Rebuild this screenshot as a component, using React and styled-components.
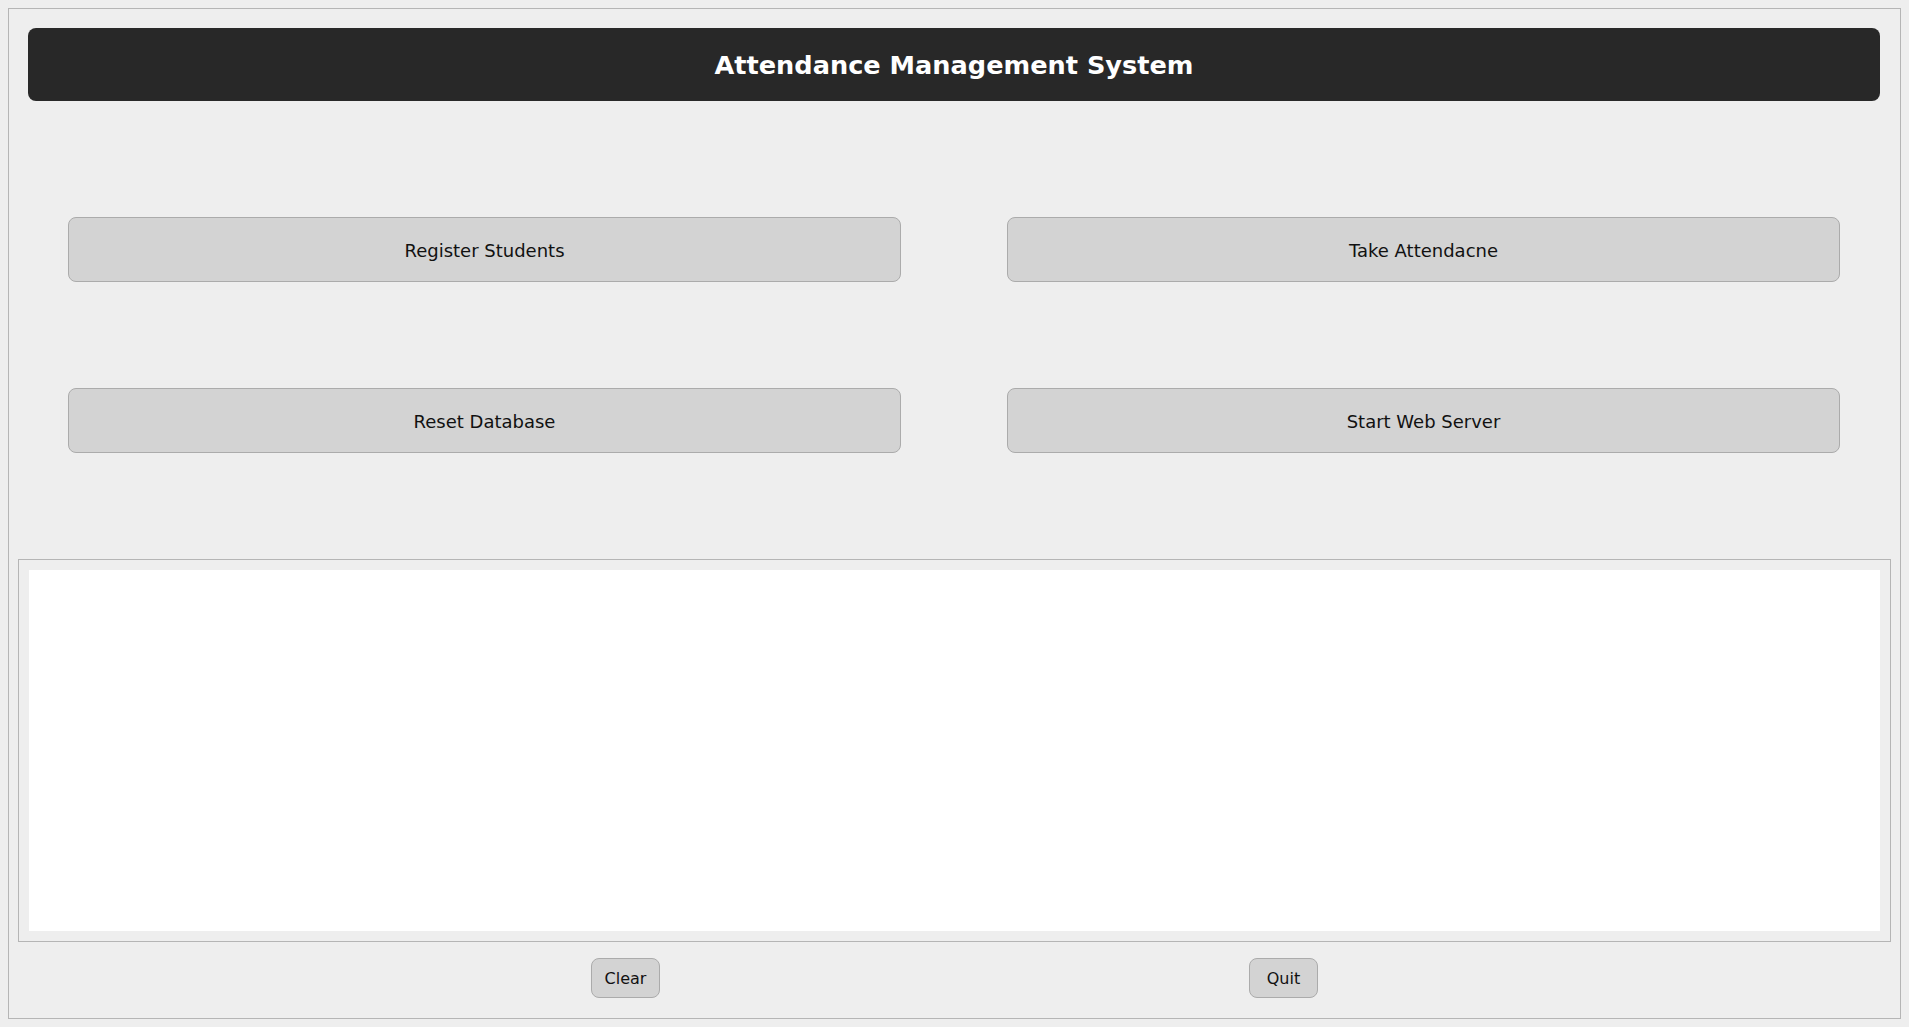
import React from 'react';
import styled, { createGlobalStyle } from 'styled-components';

const GlobalStyle = createGlobalStyle`
    html, body {
        margin: 0;
        padding: 0;
        background: #eeeeee;
    }

    body {
        margin: 8px;
        font-family: "DejaVu Sans", Verdana, sans-serif;
    }
`;

const App = () => {
    return (
        <>
            <GlobalStyle />
            <WindowFrame>
                <Header>Attendance Management System</Header>
                <ActionGrid>
                    <ActionButton>Register Students</ActionButton>
                    <ActionButton>Take Attendacne</ActionButton>
                    <ActionButton>Reset Database</ActionButton>
                    <ActionButton>Start Web Server</ActionButton>
                </ActionGrid>
                <OutputBox>
                    <OutputArea readOnly />
                </OutputBox>
                <Footer>
                    <SmallButton>Clear</SmallButton>
                    <SmallButton>Quit</SmallButton>
                </Footer>
            </WindowFrame>
        </>
    );
};

export default App;

const WindowFrame = styled.div`
    box-sizing: border-box;
    height: 1011px;
    border: 1px solid #b5b5b5;
    padding: 9px;
    display: flex;
    flex-direction: column;
    background: #eeeeee;
`;

const Header = styled.div`
    margin: 10px 11px 0 10px;
    height: 73px;
    flex-shrink: 0;
    display: flex;
    align-items: center;
    justify-content: center;
    padding-top: 1px;
    box-sizing: border-box;
    background: #282828;
    border-radius: 8px;
    color: #ffffff;
    font-weight: bold;
    font-size: 25.6px;
`;

const ActionGrid = styled.div`
    display: grid;
    grid-template-columns: 1fr 1fr;
    grid-auto-rows: 65px;
    column-gap: 106px;
    row-gap: 106px;
    padding: 116px 51px 106px 50px;
`;

const ActionButton = styled.button`
    font-family: inherit;
    font-size: 18px;
    color: #111111;
    padding: 2px 0 0;
    background: #d3d3d3;
    border: 1px solid #ababab;
    border-radius: 8px;
    cursor: pointer;

    &:hover {
        background: #dadada;
    }
`;

const OutputBox = styled.div`
    box-sizing: border-box;
    height: 383px;
    flex-shrink: 0;
    border: 1px solid #b5b5b5;
    padding: 10px;
    display: flex;
`;

const OutputArea = styled.textarea`
    flex: 1;
    border: none;
    outline: none;
    resize: none;
    background: #ffffff;
    font-family: "DejaVu Sans Mono", monospace;
    font-size: 14px;
`;

const Footer = styled.div`
    display: flex;
    justify-content: center;
    gap: 589px;
    padding-top: 16px;
`;

const SmallButton = styled.button`
    font-family: inherit;
    font-size: 16px;
    color: #111111;
    height: 40px;
    width: 69px;
    padding: 1px 0 0;
    background: #d3d3d3;
    border: 1px solid #ababab;
    border-radius: 8px;
    cursor: pointer;
`;
